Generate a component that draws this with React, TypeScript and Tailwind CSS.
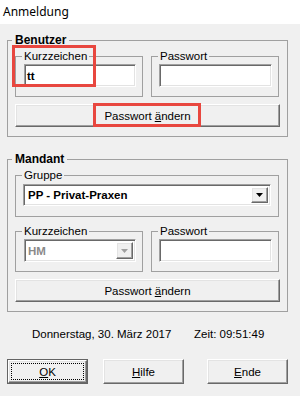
import React from "react";

const sunken =
  "bg-white border border-t-[#a0a0a0] border-l-[#a0a0a0] border-r-white border-b-white shadow-[inset_1px_1px_0_#696969,inset_-1px_-1px_0_#e3e3e3]";
const raised =
  "bg-[#f0f0f0] border border-t-white border-l-white border-r-[#696969] border-b-[#696969] shadow-[inset_-1px_-1px_0_#a0a0a0,inset_1px_1px_0_#e3e3e3]";

const Arrow: React.FC<{ color: string }> = ({ color }) => (
  <svg width="7" height="4" viewBox="0 0 7 4">
    <path d="M0 0h7L3.5 4z" fill={color} />
  </svg>
);

const PwButton: React.FC<{ className?: string }> = ({ className }) => (
  <button className={`${raised} h-[23px] w-full flex items-center justify-center ${className ?? ""}`}>
    Passwort <span className="underline ml-[3px]">ä</span>ndern
  </button>
);

const SmallGroup: React.FC<{ label: string; children: React.ReactNode }> = ({ label, children }) => (
  <fieldset className="w-[128px] border border-[#a0a0a0] pl-2 pr-[6px] pt-[1px] pb-[9px]">
    <legend className="ml-[-2px] px-[2px] leading-[14px]">{label}</legend>
    {children}
  </fieldset>
);

const DlgButton: React.FC<{ first: string; rest: string; def?: boolean; className?: string }> = ({
  first,
  rest,
  def,
  className,
}) =>
  def ? (
    <div className={`w-[81px] h-[25px] border border-[#646464] ${className ?? ""}`}>
      <div className={`${raised} w-full h-full p-[2px]`}>
        <div className="w-full h-full border border-dotted border-black flex items-center justify-center">
          <span className="underline">{first}</span>
          {rest}
        </div>
      </div>
    </div>
  ) : (
    <button className={`${raised} w-[81px] h-[25px] flex items-center justify-center ${className ?? ""}`}>
      <span className="underline">{first}</span>
      {rest}
    </button>
  );

export default function App() {
  return (
    <div className="relative w-[300px] h-[396px] overflow-hidden bg-[#f0f0f0] text-black font-['Liberation_Sans',Arial,sans-serif] text-[11.5px] leading-[14px]">
      <div className="h-6 bg-white pl-[3px] flex items-center font-['Noto_Sans',sans-serif] text-[12px]">
        Anmeldung
      </div>

      <fieldset className="mt-[9px] ml-[7px] w-[281px] border border-[#a0a0a0] px-[7px] pt-[2px] pb-[9px]">
        <legend className="ml-[-3px] px-[3px] font-bold text-[12px] leading-[14px]">Benutzer</legend>
        <div className="flex gap-2">
          <SmallGroup label="Kurzzeichen">
            <div className={`${sunken} w-[112px] h-[23px] flex items-center pl-[2px] font-bold`}>tt</div>
          </SmallGroup>
          <SmallGroup label="Passwort">
            <div className={`${sunken} w-[113px] h-[23px] ml-[-1px]`} />
          </SmallGroup>
        </div>
        <PwButton className="mt-[7px]" />
      </fieldset>

      <fieldset className="mt-[15px] ml-[7px] w-[281px] border border-[#a0a0a0] px-[7px] pt-[2px] pb-[9px]">
        <legend className="ml-[-3px] px-[3px] font-bold text-[12px] leading-[14px]">Mandant</legend>
        <fieldset className="w-[264px] border border-[#a0a0a0] pl-[7px] pt-[2px] pb-[10px]">
          <legend className="ml-[-1px] px-[2px] leading-[14px]">Gruppe</legend>
          <div className={`${sunken} w-[248px] h-[22px] flex items-stretch p-[2px]`}>
            <div className="flex-1 flex items-center pl-[2px] font-bold">PP - Privat-Praxen</div>
            <div className={`${raised} w-[17px] flex items-center justify-center`}>
              <Arrow color="#000" />
            </div>
          </div>
        </fieldset>
        <div className="flex gap-2 mt-[7px]">
          <SmallGroup label="Kurzzeichen">
            <div className={`${sunken} w-[112px] h-[23px] flex items-stretch p-[2px]`}>
              <div className="flex-1 flex items-center pl-[1px] font-bold text-[#8a8a8a]">HM</div>
              <div className={`${raised} w-[17px] flex items-center justify-center`}>
                <Arrow color="#a0a0a0" />
              </div>
            </div>
          </SmallGroup>
          <SmallGroup label="Passwort">
            <div className={`${sunken} w-[113px] h-[23px] ml-[-1px]`} />
          </SmallGroup>
        </div>
        <PwButton className="mt-[7px]" />
      </fieldset>

      <div className="mt-[15px] flex pl-[32px]">
        <span className="w-[162px]">Donnerstag, 30. März 2017</span>
        <span>Zeit: 09:51:49</span>
      </div>

      <div className="mt-[18px] flex pl-[7px]">
        <DlgButton first="O" rest="K" def />
        <DlgButton first="H" rest="ilfe" className="ml-[15px]" />
        <DlgButton first="E" rest="nde" className="ml-[23px]" />
      </div>

      <div className="absolute left-[12px] top-[45px] w-[84px] h-[42px] border-[3px] border-[#e8473f]" />
      <div className="absolute left-[93px] top-[103px] w-[108px] h-[24px] border-[3px] border-[#e8473f]" />
    </div>
  );
}
